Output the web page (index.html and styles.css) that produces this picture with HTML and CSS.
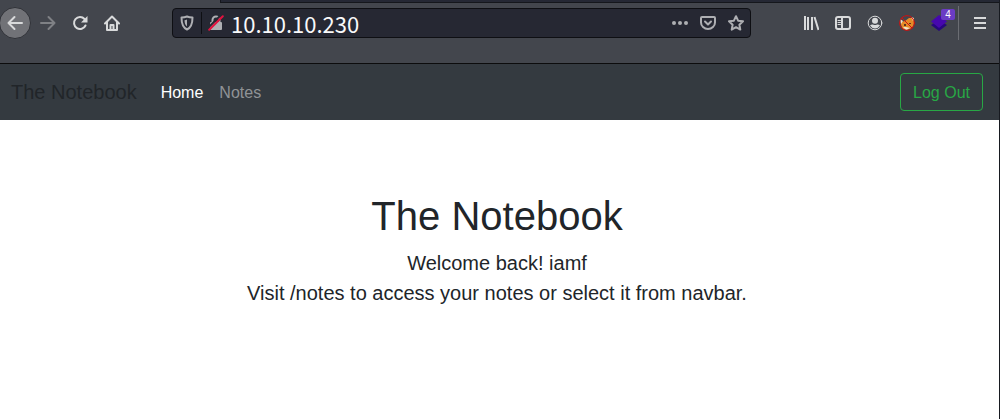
FILE: index.html
```html
<!DOCTYPE html>
<html lang="en">
<head>
<meta charset="utf-8">
<title>The Notebook</title>
<link rel="stylesheet" href="styles.css">
</head>
<body>
<div class="window">
  <header class="chrome">
    <div class="tabstrip"><div class="tab"></div><div class="tabs-rest"></div></div>
    <div class="toolbar">
      <div class="group nav-group">
        <button class="tool back" aria-label="Back"><svg viewBox="0 0 16 16"><path d="M15 8H1.500M7.500 2L1.500 8l6 6" /></svg></button>
        <button class="tool dim" aria-label="Forward"><svg viewBox="0 0 16 16"><path d="M1 8h13.500M8.500 2l6 6-6 6" /></svg></button>
        <button class="tool" aria-label="Reload"><svg viewBox="0 0 16 16"><path d="M13.500 10.500A6 6 0 1 1 12.500 4" /><path class="solid" d="M15.500 1v6.500H9z" /></svg></button>
        <button class="tool" aria-label="Home page"><svg viewBox="0 0 16 16"><path d="M1 8.500l7-7 7 7M3 7v8h10V7" /><path d="M6.500 15v-5h3v5" /></svg></button>
      </div>
      <div class="urlbar">
        <button class="small-tool" aria-label="Tracking protection"><svg viewBox="0 0 16 16"><path d="M8 1.500c2 .8 4 1 5.500 1C13.500 8 12.500 12.500 8 14.500 3.500 12.500 2.500 8 2.500 2.500c1.500 0 3.500-.2 5.500-1z" /><path class="solid" d="M8 4.500v7C6.200 10 5.600 8 5.500 5.200 6.400 5.100 7.300 4.900 8 4.500z" /></svg></button>
        <span class="divider"></span>
        <button class="small-tool lock" aria-label="Connection is not secure"><svg viewBox="0 0 16 16"><path d="M4.500 8V5a3.500 3.500 0 0 1 7 0v3" /><rect class="solid" x="2" y="7" width="12" height="8" rx="1" /><path class="gap" d="M.5 12.500L12.500.5" /><path class="strike" d="M1.200 14.800L14.800 1.200" /></svg></button>
        <input class="address" type="text" aria-label="Address" value="10.10.10.230">
        <button class="small-tool" aria-label="Page actions"><svg viewBox="0 0 16 16"><circle class="solid" cx="2" cy="8" r="2" /><circle class="solid" cx="8" cy="8" r="2" /><circle class="solid" cx="14" cy="8" r="2" /></svg></button>
        <button class="small-tool" aria-label="Save to Pocket"><svg viewBox="0 0 16 16"><path d="M2 2h12q1 0 1 1V7.500a7 6.500 0 0 1-14 0V3q0-1 1-1z" /><path d="M5 6.500L8 9.500l3-3" /></svg></button>
        <button class="small-tool" aria-label="Bookmark"><svg viewBox="0 0 16 16"><path d="M8 1.200l2.100 4.500 4.900.6-3.600 3.400.9 4.900L8 12.200l-4.300 2.400.9-4.900L1 6.300l4.900-.6z" /></svg></button>
      </div>
      <div class="group end-group">
        <button class="tool" aria-label="Library"><svg class="square" viewBox="0 0 16 16"><path d="M2 1v14M5 2v13M9 2v13M11.500 2L15.500 15" /></svg></button>
        <button class="tool" aria-label="Sidebars"><svg viewBox="0 0 16 16"><rect x="1" y="2" width="14" height="12" rx="2" /><path d="M7 2v12" /><path class="fine" d="M3 5.500h2.500M3 7.500h2.500M3 9.500h2.500" /></svg></button>
        <button class="tool" aria-label="Account"><svg viewBox="0 0 16 16"><circle class="fine" cx="8" cy="8" r="6.800" /><circle class="solid" cx="8" cy="5.800" r="3" /><path class="solid" d="M3 10.500q1.500-1.500 3-1 2 1 4 0 1.500-.5 3 1-2 3-5 3t-5-3z" /></svg></button>
        <button class="tool" aria-label="Proxy"><svg viewBox="0 0 16 16"><path fill="#e68a28" d="M2 7l4-1 4-3 5 0v6l-2 4-5 2-4-1-2-4z" /><path fill="#efe3cf" d="M1 4l3 2-2 3zM12 2l3 1-1 3zM4 12l3 0 4 1-4 2z" /><path fill="#5a3520" d="M5 9h2v2H5zM10 8h2v1h-2z" /><path class="ban" d="M3 3l10 10" /><circle class="ban" cx="8" cy="8" r="7.400" /></svg></button>
        <button class="tool badge-host" aria-label="Wappalyzer, 4 found"><svg viewBox="0 0 16 16"><path fill="#26077d" d="M0 10l8-5 8 5-8 6z" /><path fill="#4608ad" d="M0 6.500L8 0l8 6.500L8 13z" /></svg><span class="badge">4</span></button>
        <span class="rule"></span>
        <button class="tool" aria-label="Menu"><svg class="square" viewBox="0 0 16 16"><path d="M2 3h12M2 8h12M2 13h12" /></svg></button>
      </div>
    </div>
  </header>
  <nav class="navbar">
    <a class="brand" href="#">The Notebook</a>
    <a class="link active" href="#">Home</a>
    <a class="link" href="#">Notes</a>
    <button class="logout">Log Out</button>
  </nav>
  <main class="content">
    <h1>The Notebook</h1>
    <p>Welcome back! iamf</p>
    <p>Visit /notes to access your notes or select it from navbar.</p>
  </main>
</div>
</body>
</html>
```
FILE: styles.css
```css
* { box-sizing: border-box; }
body { margin: 0; background: #fff; color: #212529; font: 16px/24px "Liberation Sans", Arial, sans-serif; }
.window { min-height: 100vh; border-right: 1px solid #171a20; }
.chrome { background: #43464d; border-bottom: 1px solid #0c0c0d; }
.tabstrip { display: flex; height: 3px; }
.tab { width: 22%; }
.tabs-rest { flex: 1; background: #252834; border-bottom: 1px solid #15171c; border-left: 1px solid #15171c; }
.toolbar { display: flex; align-items: center; height: 60px; padding: 0 3px 20px 0; }
button { padding: 0; border: 0; background: none; color: inherit; font: inherit; }
svg { display: block; width: 16px; height: 16px; fill: none; stroke: currentColor; stroke-width: 2; stroke-linejoin: round; stroke-linecap: round; }
svg [fill] { stroke: none; }
.square { stroke-linecap: butt; }
.solid { fill: currentColor; stroke: none; }
.fine { stroke-width: 1; }
.group { display: flex; align-items: center; color: #d9dadb; }
.tool { position: relative; display: grid; place-items: center; flex: none; width: 32px; height: 32px; }
.nav-group { margin-left: -1px; }
.back { margin-right: 1px; border: 1px solid #303238; border-radius: 50%; background: #717277; }
.dim { color: #7f8185; }
.urlbar { display: flex; align-items: center; flex: 1; height: 30px; margin: 0 44px; border: 1px solid #0e0f13; border-radius: 4px; background: #262833; color: #aeafb3; }
.small-tool { display: grid; place-items: center; flex: none; width: 28px; height: 28px; }
.divider { width: 1px; height: 22px; background: #0e0f13; }
.gap { stroke: #262833; }
.lock .strike { stroke: #e2123f; }
.address { flex: 1; min-width: 0; height: 28px; padding: 0 1px; border: 0; outline: 0; background: none; color: #f9f9fa; font: 22px/28px "Noto Sans CJK SC", sans-serif; }
.ban { stroke: #d01010; stroke-width: 1; }
.badge { position: absolute; top: 2px; right: 0; width: 14px; height: 11px; border-radius: 2px; background: #6b3cc4; color: #fff; font-size: 10px; line-height: 11px; text-align: center; }
.rule { width: 1px; height: 34px; margin: 0 5px 0 3px; background: #6b6d73; }
.navbar { display: flex; align-items: center; height: 56px; padding: 8px 16px 8px 11px; background: #343a40; }
.navbar a { text-decoration: none; }
.brand { margin-right: 16px; color: #212529; font-size: 20px; line-height: 30px; }
.link { padding: 9px 8px 7px; color: #909396; }
.link.active { color: #fff; }
.logout { height: 38px; margin-left: auto; padding: 2px 12px 0; border: 1px solid #28a745; border-radius: 4px; color: #28a745; }
.content { padding: 72px 20px 32px 15px; text-align: center; }
h1 { margin: 0 0 8px; font-size: 40px; line-height: 48px; font-weight: 400; }
p { margin: 0; font-size: 20px; line-height: 30px; }
```
